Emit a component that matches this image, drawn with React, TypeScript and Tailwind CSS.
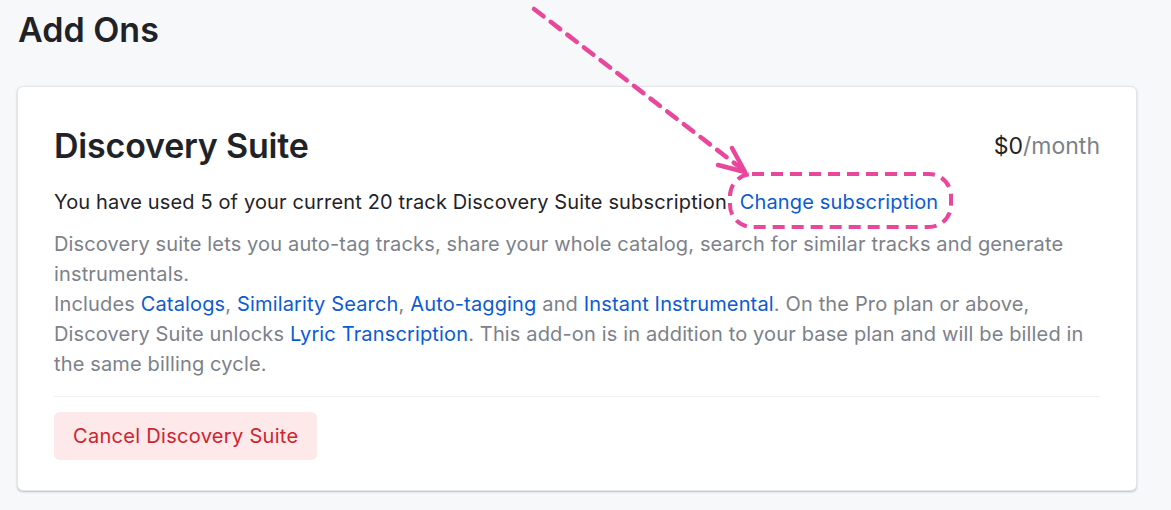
import React from 'react';

function Annotation() {
  return (
    <svg
      className="pointer-events-none absolute left-0 top-0"
      width="1171"
      height="510"
      viewBox="0 0 1171 510"
      fill="none"
    >
      <line x1="534" y1="9" x2="742" y2="169" stroke="#e8479b" strokeWidth="4.5" strokeLinecap="round" strokeDasharray="12 9" />
      <path d="M732 148 L745 172 L718 165" stroke="#e8479b" strokeWidth="4.5" strokeLinecap="round" strokeLinejoin="round" />
      <rect x="730" y="174" width="221" height="53" rx="22" stroke="#e8479b" strokeWidth="4" strokeDasharray="12 7" />
    </svg>
  );
}

function Link({children, className = ''}: {children: React.ReactNode; className?: string}) {
  return <a href="#" className={`text-[#0b5bd3] ${className}`}>{children}</a>;
}

export default function App() {
  return (
    <div className="relative min-h-[510px] bg-[#f7f8fa] px-[17px] pt-[9px] font-['Inter','Liberation_Sans',sans-serif] text-[#1f2328]">
      <h1 className="pl-px text-[34px] font-semibold leading-[42px]">Add Ons</h1>

      <div className="mt-[35px] w-[1120px] rounded-md border border-[#e3e5e8] bg-white px-9 pb-[30px] pt-[37px] shadow-[0_1px_2px_rgba(140,150,165,0.6)]">
        <div className="flex items-start justify-between">
          <h2 className="text-[34px] font-semibold leading-[44px] tracking-[-0.2px]">Discovery Suite</h2>
          <div className="pt-[8px] text-[23px] leading-[28px]">
            $0<span className="text-[#7c818b]">/month</span>
          </div>
        </div>

        <p className="mt-[19px] text-[20px] leading-[30px] tracking-[0.15px]">
          You have used 5 of your current 20 track Discovery Suite subscription{' '}
          <Link className="ml-[7px]">Change subscription</Link>
        </p>

        <div className="mt-[12px] text-[20px] leading-[30px] tracking-[0.15px] text-[#7c818b]">
          <p>
            Discovery suite lets you auto-tag tracks, share your whole catalog, search for similar tracks and generate
            instrumentals.
          </p>
          <p>
            Includes <Link>Catalogs</Link>, <Link>Similarity Search</Link>, <Link>Auto-tagging</Link> and{' '}
            <Link>Instant Instrumental</Link>. On the Pro plan or above, Discovery Suite unlocks{' '}
            <Link>Lyric Transcription</Link>. This add-on is in addition to your base plan and will be billed in the
            same billing cycle.
          </p>
        </div>

        <div className="mt-[17px] border-t border-[#eef0f2] pt-[15px]">
          <button className="rounded-md bg-[#fde9ea] px-[19px] py-[9px] text-[20px] leading-[30px] tracking-[0.3px] text-[#d0232f]">
            Cancel Discovery Suite
          </button>
        </div>
      </div>

      <Annotation />
    </div>
  );
}
